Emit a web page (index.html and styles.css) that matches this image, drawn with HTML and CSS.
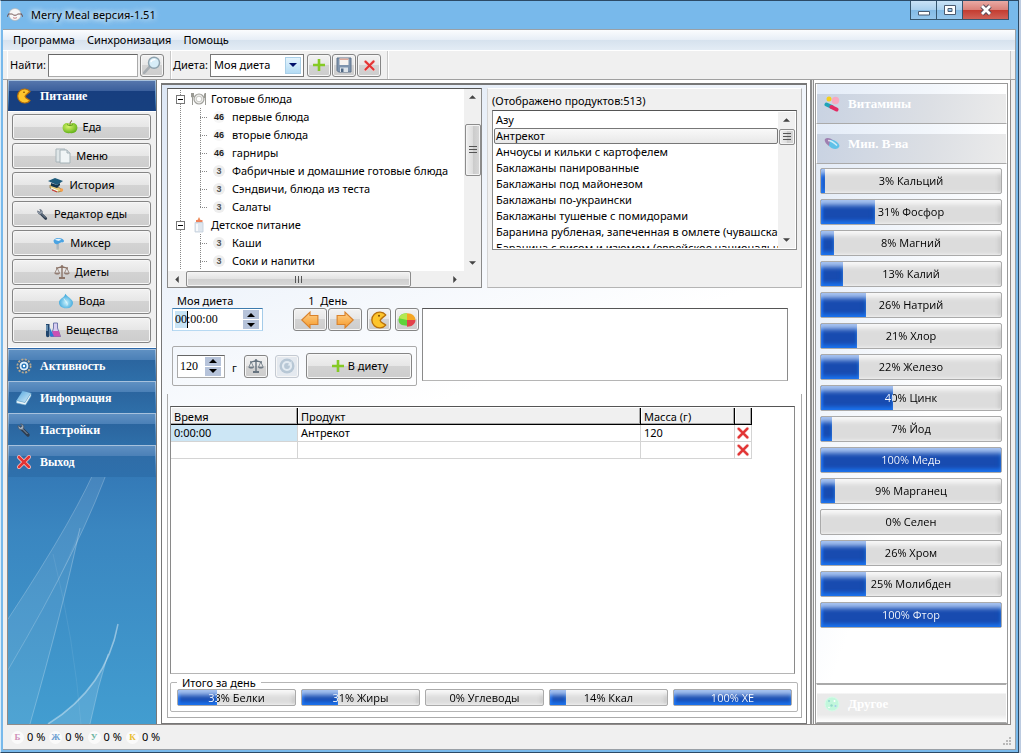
FILE: index.html
```html
<!DOCTYPE html>
<html lang="ru">
<head>
<meta charset="utf-8">
<title>Merry Meal версия-1.51</title>
<link rel="stylesheet" href="styles.css">
</head>
<body>
<svg class="defs" aria-hidden="true">
  <defs>
    <linearGradient id="gOrange" x1="0" y1="0" x2="0" y2="1"><stop offset="0" stop-color="#ffd089"/><stop offset="1" stop-color="#f59a2b"/></linearGradient>
    <linearGradient id="gBook" x1="0" y1="0" x2="1" y2="1"><stop offset="0" stop-color="#4fa3dc"/><stop offset="1" stop-color="#d9f0fb"/></linearGradient>
    <radialGradient id="gApple" cx=".4" cy=".35" r=".7"><stop offset="0" stop-color="#d9f56c"/><stop offset="1" stop-color="#5cae14"/></radialGradient>
    <radialGradient id="gDrop" cx=".5" cy=".6" r=".6"><stop offset="0" stop-color="#c4f0fc"/><stop offset="1" stop-color="#2f9fd8"/></radialGradient>
  </defs>
  <symbol id="pac" viewBox="0 0 16 16"><path d="M14 3.5A7 7 0 1 0 14 12.500C12 11 9.500 10.500 9 8.300C9.500 6.500 12 5.500 14 3.500Z" fill="#fdc52c" stroke="#b9700a" stroke-width="1.200" stroke-linejoin="round"/><circle cx="8" cy="4.200" r=".8" fill="#6d3d00"/></symbol>
  <symbol id="apple" viewBox="0 0 16 16"><path d="M8 5C5 3 .6 4.500 .6 8.500S4 15 8 14c4 1 7.400-1.500 7.400-5.500S11 3 8 5Z" fill="url(#gApple)"/><path d="M8 5.500C8 3.500 8.500 2.500 10 1.500" fill="none" stroke="#69551b" stroke-width="1"/><path d="M5 5.500c2 1.500 4 1.500 6 0" fill="none" stroke="#4a920f" stroke-width=".8"/></symbol>
  <symbol id="doc" viewBox="0 0 16 16"><path d="M1 1h9v13H1z" fill="#dfe6e8" stroke="#a9b5ba"/><path d="M5 2h7l3 3v10H5z" fill="#f0f5f6" stroke="#a6b3b8"/><path d="M12 2v3h3" fill="#d2dce0" stroke="#a6b3b8"/></symbol>
  <symbol id="grad" viewBox="0 0 16 16"><path d="M2 8l10 3 2 3-4 1-8-4z" fill="#e9cf7d" stroke="#8b6b2b" stroke-width=".7"/><path d="M3 11l7 3" stroke="#fff" stroke-width="1"/><path d="M0 4l7-3 8 3-6 4z" fill="#1f5c7c"/><path d="M3 6v3l6 2 3-3V6L9 8z" fill="#12364f"/><circle cx="13.500" cy="13" r="1.700" fill="#f5a04c"/><path d="M4 13l5 2" stroke="#c33" stroke-width="1"/></symbol>
  <symbol id="wrench" viewBox="0 0 16 16"><path d="M5 6l7 7" stroke="#2e3d4f" stroke-width="3.400" stroke-linecap="round"/><path d="M2 3.500C2 7 4 8.200 6.500 7.400L7.600 6C8.300 4 7 2 4.600 1.900L6.200 4 4.800 5.400Z" fill="#a8b3c0" stroke="#485566" stroke-width=".8"/><path d="M6.500 7l5 5" stroke="#8d9cac" stroke-width="1"/></symbol>
  <symbol id="mixer" viewBox="0 0 16 16"><path d="M5.500 8h3v7.500h-3z" fill="#aeb9c1"/><path d="M2 4C5 0 12 1 14.500 4c.8 2-.5 3-2.500 2.600C9 7 8 9.500 5.500 9 3 8.500 1.500 6 2 4Z" fill="#4aa3e2"/><path d="M3.500 3.500c3-2 6-1.500 8 0L8 5Z" fill="#e8f5fd"/></symbol>
  <symbol id="scales" viewBox="0 0 16 16"><path d="M8 1.500v12M2 4c3 0 4-1 6-1s3 1 6 1" fill="none" stroke="currentColor" stroke-width="1.400"/><path d="M3.200 4L.8 9.200h4.800zM12.800 4l-2.400 5.200h4.800z" fill="none" stroke="currentColor" stroke-width=".8"/><path d="M.5 9.200h5.400c-.4 1.800-5 1.800-5.400 0zM10.100 9.200h5.400c-.4 1.800-5 1.800-5.400 0zM5 13h6v2H5z" fill="currentColor"/><circle cx="8" cy="2.500" r="1.300" fill="currentColor"/></symbol>
  <symbol id="drop" viewBox="0 0 16 16"><path d="M7.500.8C9 4 15 6 15 10a6 5.500 0 0 1-6.500 5.300C4 15.500 1 13 1 9.500 1 6 6 5 7.500.8Z" fill="url(#gDrop)"/><path d="M6 5.500c1 3 4 3.500 3 7" fill="none" stroke="#fff" stroke-opacity=".7"/></symbol>
  <symbol id="flasks" viewBox="0 0 16 16"><path d="M1 2h3.500v11.500a1.700 1.700 0 0 1-3.500 0z" fill="#20456d"/><path d="M2 3v6" stroke="#a9d4ee" stroke-width="1"/><path d="M8.500 1h4v5l3 8.500h-9.500l2.500-8.500z" fill="#d7cdf0" stroke="#54609c" stroke-width=".8"/><path d="M7.800 9h6l1.700 5.500h-9z" fill="#c950b4"/><path d="M4.500 5L9 14.500H5z" fill="#2a7bd2"/></symbol>
  <symbol id="gear" viewBox="0 0 16 16"><circle cx="8" cy="8" r="6.500" fill="none" stroke="#b9a98e" stroke-width="2" stroke-dasharray="2 1.400"/><circle cx="8" cy="8" r="5" fill="#dceefb" stroke="#1f4f80" stroke-width="1"/><circle cx="8" cy="8" r="2.600" fill="#2173b8"/><circle cx="8" cy="8" r="1.200" fill="#fff"/></symbol>
  <symbol id="book" viewBox="0 0 16 16"><path d="M6.500 1l8.500 2-6 9.500-8.500-2z" fill="url(#gBook)"/><path d="M.5 10.500l8.500 2L15 3v3L9.500 15l-9-2z" fill="#eef6fa" stroke="#6aa9cf" stroke-width=".6"/></symbol>
  <symbol id="cross" viewBox="0 0 16 16"><path d="M3 3.200L13 13M13 3L3 13" stroke="#f3c4c4" stroke-width="4" stroke-linecap="round"/><path d="M3 3.200L13 13M13 3L3 13" stroke="#e23333" stroke-width="2.500" stroke-linecap="round"/></symbol>
  <symbol id="plus" viewBox="0 0 16 16"><path d="M8 2v12M2 8h12" stroke="#85ca25" stroke-width="2.600"/></symbol>
  <symbol id="disk" viewBox="0 0 16 16"><path d="M1 1h14v14H2.500L1 13.500z" fill="#7f94ad" stroke="#60748c"/><path d="M3.500 1.500h9V8h-9z" fill="#f7f3ef"/><path d="M3.500 1.500h9V3h-9z" fill="#dba89b"/><path d="M4 10.500h8V15H4z" fill="#dde4ea"/><path d="M5 11.500h2.500V15H5z" fill="#526a86"/></symbol>
  <symbol id="lens" viewBox="0 0 16 16"><path d="M1 15l5-5.500" stroke="#a7adb2" stroke-width="2.400" stroke-linecap="round"/><circle cx="9.800" cy="6" r="4.900" fill="#d7edf8" stroke="#8ea2ae" stroke-width="1.300"/><path d="M7 5.500c.5-2 2-2.500 4-2.300" fill="none" stroke="#fff" stroke-width="1.200"/></symbol>
  <symbol id="arrow" viewBox="0 0 16 16"><path d="M.7 8L8 1v3h7v8H8v3z" fill="url(#gOrange)" stroke="#d9822b" stroke-width="1"/></symbol>
  <symbol id="pie" viewBox="0 0 16 16"><path d="M8 8V2C3 2 .5 4.500 .5 8S3 13 8 13z" fill="#5fd33c"/><path d="M8 8h7.500c0-3-2.500-6-7.500-6z" fill="#f5a623"/><path d="M8 8h7.500c0 3.500-3 6-7.500 6z" fill="#e3424b"/><path d="M8 8V2C4 2 1.500 4 .8 6.500z" fill="#b5e850"/></symbol>
  <symbol id="redo" viewBox="0 0 16 16"><circle cx="8" cy="8" r="7.500" fill="#b7c7d5"/><circle cx="8" cy="8" r="4" fill="none" stroke="#e3ebf2" stroke-width="2.200"/><path d="M12.500 3v4.500H8.500z" fill="#e3ebf2"/></symbol>
  <symbol id="plate" viewBox="0 0 16 16"><circle cx="8" cy="8" r="5" fill="#ededeb" stroke="#a1a19c" stroke-width="1.200"/><circle cx="8" cy="8" r="2.800" fill="#fff" stroke="#c7c7c2"/><path d="M1.500 2v12M14.500 2v12M.5 2v4h2V2M13.500 7V3l1-1" fill="none" stroke="#9a9a94"/></symbol>
  <symbol id="bottle" viewBox="0 0 16 16"><path d="M8 0l1.500 3h-3z" fill="#ef8e5d"/><path d="M5 3h6.500v2.500H5z" fill="#f0825a"/><path d="M4 5.500h8V15H4z" fill="#dfe6ee" stroke="#c2cedb" stroke-width=".8"/><path d="M6 7v7" stroke="#fff" stroke-width="1.500"/></symbol>
  <symbol id="pills" viewBox="0 0 16 16"><circle cx="5" cy="3" r="2.500" fill="#f5cf1b"/><circle cx="11.500" cy="4.500" r="3.700" fill="#f7a9c0"/><path d="M2.500 8.500l5.500 2.500" stroke="#20a4b8" stroke-width="4" stroke-linecap="round"/><path d="M7.500 11l5 2.500" stroke="#e22a62" stroke-width="4" stroke-linecap="round"/></symbol>
  <symbol id="capsule" viewBox="0 0 16 16"><path d="M1 3c2-2 6-1 9 2l-5 5C2 8 0 5 1 3Z" fill="#9f7fb0"/><path d="M6 4c4-1 9 3 9.500 6-1 4-7 4-10.500 0z" fill="#5fc1e8"/><path d="M4 4.500c3 0 6 2 9 5" fill="none" stroke="#fff" stroke-opacity=".7" stroke-width="1.500"/></symbol>
  <symbol id="microbe" viewBox="0 0 16 16"><circle cx="8" cy="8" r="7" fill="#c2f7dc" stroke="#d8fbe9"/><circle cx="5" cy="5" r="1" fill="#8fd5cf"/><circle cx="10.500" cy="5" r="1" fill="#fff"/><circle cx="7.500" cy="9.500" r="1.200" fill="#92d9c8"/><circle cx="11.500" cy="10" r="1" fill="#a6c6ee"/><circle cx="5" cy="11.500" r=".8" fill="#fff"/></symbol>
  <symbol id="chef" viewBox="0 0 16 16"><ellipse cx="8" cy="7.500" rx="6" ry="6" fill="#f7f7f7" stroke="#b6b6b6" stroke-width=".7"/><path d="M1 7h4.500l1 1.200h3l1-1.200H15M0 10l1.500-3M16 10l-1.500-3" fill="none" stroke="#6b4c4c" stroke-width=".9"/><path d="M6 10.500c1 1 3 .8 4 0" fill="none" stroke="#c98082"/></symbol>
  <symbol id="up" viewBox="0 0 8 4"><path d="M0 4l4-4 4 4z" fill="currentColor"/></symbol>
  <symbol id="down" viewBox="0 0 8 4"><path d="M0 0l4 4 4-4z" fill="currentColor"/></symbol>
  <symbol id="left" viewBox="0 0 4 8"><path d="M4 0L0 4l4 4z" fill="currentColor"/></symbol>
  <symbol id="right" viewBox="0 0 4 8"><path d="M0 0l4 4-4 4z" fill="currentColor"/></symbol>
</svg>

<div class="window">
  <header class="titlebar">
    <svg class="icon"><use href="#chef"/></svg>
    <h1 class="caption">Merry Meal версия-1.51</h1>
    <div class="winbtns">
      <button class="winbtn" aria-label="Свернуть"><svg viewBox="0 0 14 14"><path d="M1.500 8.500h11v3.500h-11z" fill="#fff" stroke="#4b5b70"/></svg></button>
      <button class="winbtn" aria-label="Развернуть"><svg viewBox="0 0 14 14"><path d="M1.500 2.500h11v9h-11zM5 5.500h4v3H5z" fill="#fff" fill-rule="evenodd" stroke="#4b5b70"/></svg></button>
      <button class="winbtn close" aria-label="Закрыть"><svg viewBox="0 0 14 14"><path d="M3 3l8 8M11 3l-8 8" stroke="#5a4a58" stroke-width="4.800"/><path d="M3 3l8 8M11 3l-8 8" stroke="#fff" stroke-width="2.800"/></svg></button>
    </div>
  </header>

  <div class="client">
    <nav class="menu">
      <button>Программа</button><button>Синхронизация</button><button>Помощь</button>
    </nav>
    <div class="toolbar">
      <div class="tools">
        <label for="find">Найти:</label>
        <input id="find" class="find" type="text">
        <button class="btn tool" aria-label="Найти"><svg class="icon big"><use href="#lens"/></svg></button>
      </div>
      <div class="tools">
        <label for="diet">Диета:</label>
        <span class="combo"><select id="diet"><option>Моя диета</option></select><span class="combo-arrow"><svg><use href="#down"/></svg></span></span>
        <button class="btn tool" aria-label="Добавить"><svg class="icon"><use href="#plus"/></svg></button>
        <button class="btn tool" aria-label="Сохранить"><svg class="icon"><use href="#disk"/></svg></button>
        <button class="btn tool" aria-label="Удалить"><svg class="icon small"><use href="#cross"/></svg></button>
      </div>
      <div class="tools rest"></div>
    </div>

    <main class="body">
      <aside class="side">
        <svg class="swoosh" viewBox="0 0 148 376" preserveAspectRatio="none" aria-hidden="true">
          <path d="M92 110Q70 165 0 271V322Q75 195 104 110Z" fill="#fff" fill-opacity=".09"/>
          <path d="M92 110Q70 165 0 271M104 110Q75 195 0 322" fill="none" stroke="#fff" stroke-opacity=".22"/>
          <path d="M72 180Q55 260 22 376H0V322Q50 240 72 180Z" fill="#fff" fill-opacity=".07"/>
          <path d="M72 180Q55 260 22 376" fill="none" stroke="#fff" stroke-opacity=".25"/>
          <path d="M45 206Q66 290 73 376" fill="none" stroke="#fff" stroke-opacity=".08"/>
          <path d="M110 276Q98 340 40 376H82Q90 338 100 306Q108 296 110 276Z" fill="#fff" fill-opacity=".12"/>
          <path d="M110 276Q98 340 40 376" fill="none" stroke="#fff" stroke-opacity=".4" stroke-width="1.500"/>
          <path d="M100 306Q90 338 82 376" fill="none" stroke="#fff" stroke-opacity=".25"/>
        </svg>
        <button class="section active"><svg class="icon"><use href="#pac"/></svg>Питание</button>
        <div class="group">
          <button class="btn wide"><svg class="icon"><use href="#apple"/></svg>Еда</button>
          <button class="btn wide"><svg class="icon"><use href="#doc"/></svg>Меню</button>
          <button class="btn wide"><svg class="icon"><use href="#grad"/></svg>История</button>
          <button class="btn wide"><svg class="icon small"><use href="#wrench"/></svg>Редактор еды</button>
          <button class="btn wide"><svg class="icon small"><use href="#mixer"/></svg>Миксер</button>
          <button class="btn wide"><svg class="icon brown"><use href="#scales"/></svg>Диеты</button>
          <button class="btn wide"><svg class="icon"><use href="#drop"/></svg>Вода</button>
          <button class="btn wide"><svg class="icon"><use href="#flasks"/></svg>Вещества</button>
        </div>
        <button class="section"><svg class="icon"><use href="#gear"/></svg>Активность</button>
        <button class="section"><svg class="icon"><use href="#book"/></svg>Информация</button>
        <button class="section"><svg class="icon"><use href="#wrench"/></svg>Настройки</button>
        <button class="section"><svg class="icon"><use href="#cross"/></svg>Выход</button>
      </aside>

      <section class="work">
        <div class="pick">
          <div class="tree">
            <ul class="nodes">
              <li><span class="row root"><i class="box"></i><svg class="icon"><use href="#plate"/></svg>Готовые блюда</span>
                <ul>
                  <li class="row"><b class="badge n46">46</b>первые блюда</li>
                  <li class="row"><b class="badge n46">46</b>вторые блюда</li>
                  <li class="row"><b class="badge n46">46</b>гарниры</li>
                  <li class="row"><b class="badge">3</b>Фабричные и домашние готовые блюда</li>
                  <li class="row"><b class="badge">3</b>Сэндвичи, блюда из теста</li>
                  <li class="row"><b class="badge">3</b>Салаты</li>
                </ul>
              </li>
              <li><span class="row root"><i class="box"></i><svg class="icon"><use href="#bottle"/></svg>Детское питание</span>
                <ul class="more">
                  <li class="row"><b class="badge">3</b>Каши</li>
                  <li class="row"><b class="badge">3</b>Соки и напитки</li>
                </ul>
              </li>
            </ul>
            <div class="vbar"><svg class="v"><use href="#up"/></svg><i class="thumb"></i><svg class="v"><use href="#down"/></svg></div>
            <div class="hbar"><svg class="h"><use href="#left"/></svg><i class="thumb"></i><svg class="h"><use href="#right"/></svg></div>
          </div>
          <div class="products">
            <p class="count">(Отображено продуктов:513)</p>
            <div class="list">
              <ul role="listbox" aria-label="Продукты">
                <li role="option">Азу</li>
                <li role="option" aria-selected="true">Антрекот</li>
                <li role="option">Анчоусы и кильки с картофелем</li>
                <li role="option">Баклажаны панированные</li>
                <li role="option">Баклажаны под майонезом</li>
                <li role="option">Баклажаны по-украински</li>
                <li role="option">Баклажаны тушеные с помидорами</li>
                <li role="option">Баранина рубленая, запеченная в омлете (чувашская)</li>
                <li role="option">Баранина с рисом и изюмом (еврейское национальное)</li>
              </ul>
              <div class="vbar"><svg class="v"><use href="#up"/></svg><i class="thumb"></i><svg class="v"><use href="#down"/></svg></div>
            </div>
          </div>
        </div>

        <div class="diary">
          <div class="entry">
            <div class="controls">
              <div class="when">
                <div class="field">
                  <label for="time">Моя диета</label>
                  <span class="spin focus"><input id="time" type="text" value="00:00:00"><span class="arrows"><button aria-label="Больше"><svg><use href="#up"/></svg></button><button aria-label="Меньше"><svg><use href="#down"/></svg></button></span></span>
                </div>
                <div class="field days">
                  <span class="day">1&nbsp; День</span>
                  <div class="pair">
                    <button class="btn step" aria-label="Предыдущий день"><svg class="icon big"><use href="#arrow"/></svg></button>
                    <button class="btn step next" aria-label="Следующий день"><svg class="icon big"><use href="#arrow"/></svg></button>
                  </div>
                </div>
                <button class="btn tool" aria-label="Питание"><svg class="icon big"><use href="#pac"/></svg></button>
                <button class="btn tool" aria-label="Диаграмма"><svg class="icon big"><use href="#pie"/></svg></button>
              </div>
              <div class="amount">
                <span class="spin mass"><input id="mass" type="text" value="120"><span class="arrows"><button aria-label="Больше"><svg><use href="#up"/></svg></button><button aria-label="Меньше"><svg><use href="#down"/></svg></button></span></span>
                <label for="mass">г</label>
                <button class="btn tool slate" aria-label="Взвесить"><svg class="icon"><use href="#scales"/></svg></button>
                <button class="btn tool off" aria-label="Обновить"><svg class="icon"><use href="#redo"/></svg></button>
                <button class="btn add"><svg class="icon"><use href="#plus"/></svg>В диету</button>
              </div>
            </div>
            <textarea class="memo" aria-label="Описание"></textarea>
          </div>

          <div class="grid">
            <table>
              <colgroup><col class="c1"><col><col class="c3"><col class="c4"></colgroup>
              <thead><tr><th>Время</th><th>Продукт</th><th>Масса (г)</th><th></th></tr></thead>
              <tbody>
                <tr><td class="cur">0:00:00</td><td>Антрекот</td><td>120</td><td class="del"><button aria-label="Удалить строку"><svg class="icon"><use href="#cross"/></svg></button></td></tr>
                <tr><td></td><td></td><td></td><td class="del"><button aria-label="Удалить строку"><svg class="icon"><use href="#cross"/></svg></button></td></tr>
              </tbody>
            </table>
          </div>

          <fieldset class="totals">
            <legend>Итого за день</legend>
            <div class="meter" style="--v:33%"><span>33% Белки</span></div>
            <div class="meter" style="--v:31%"><span>31% Жиры</span></div>
            <div class="meter" style="--v:0%"><span>0% Углеводы</span></div>
            <div class="meter" style="--v:14%"><span>14% Ккал</span></div>
            <div class="meter" style="--v:100%"><span>100% ХЕ</span></div>
          </fieldset>
        </div>
      </section>

      <div class="split"></div>

      <aside class="nutrients">
        <button class="tab"><svg class="icon"><use href="#pills"/></svg>Витамины</button>
        <button class="tab open"><svg class="icon"><use href="#capsule"/></svg>Мин. В-ва</button>
        <div class="meters">
          <div class="meter" style="--v:2%"><span>3% Кальций</span></div>
          <div class="meter" style="--v:30%"><span>31% Фосфор</span></div>
          <div class="meter" style="--v:7%"><span>8% Магний</span></div>
          <div class="meter" style="--v:12%"><span>13% Калий</span></div>
          <div class="meter" style="--v:25%"><span>26% Натрий</span></div>
          <div class="meter" style="--v:20%"><span>21% Хлор</span></div>
          <div class="meter" style="--v:21%"><span>22% Железо</span></div>
          <div class="meter" style="--v:40%"><span>40% Цинк</span></div>
          <div class="meter" style="--v:6%"><span>7% Йод</span></div>
          <div class="meter" style="--v:100%"><span>100% Медь</span></div>
          <div class="meter" style="--v:8%"><span>9% Марганец</span></div>
          <div class="meter" style="--v:0%"><span>0% Селен</span></div>
          <div class="meter" style="--v:25%"><span>26% Хром</span></div>
          <div class="meter" style="--v:25%"><span>25% Молибден</span></div>
          <div class="meter" style="--v:100%"><span>100% Фтор</span></div>
        </div>
        <button class="tab faint"><svg class="icon"><use href="#microbe"/></svg>Другое</button>
      </aside>
    </main>

    <footer class="status">
      <span><b class="dot pink">Б</b>0 %</span>
      <span><b class="dot blue">Ж</b>0 %</span>
      <span><b class="dot green">У</b>0 %</span>
      <span><b class="dot yellow">К</b>0 %</span>
      <svg class="grip" viewBox="0 0 9 9" aria-hidden="true"><path d="M7 0h2v2H7zM4 3h2v2H4zM7 3h2v2H7zM1 6h2v2H1zM4 6h2v2H4zM7 6h2v2H7z" fill="#b9b9b9"/></svg>
    </footer>
  </div>
</div>
</body>
</html>
```
FILE: styles.css
```css
* { box-sizing: border-box; }
body {
  margin: 0;
  background: #bccbe0;
  font: 11px/16px "Noto Sans", "Open Sans", sans-serif;
  color: #000;
}
button, input, select, textarea { font: inherit; color: inherit; margin: 0; padding: 0; }
button { border: 0; background: none; }
ul, p, h1 { margin: 0; padding: 0; list-style: none; }
.defs { position: absolute; width: 0; height: 0; }
.icon { width: 16px; height: 16px; flex: none; display: block; }
.icon.small { width: 13px; height: 13px; }
.icon.big { width: 18px; height: 18px; }

/* Window frame */
.window {
  display: flex;
  flex-direction: column;
  height: 100vh;
  margin-right: 2px;
  padding: 0 2px 2px 2px;
  border: 1px solid #2c4a66;
  border-left-color: #d9ecf9;
  background: #78b9eb;
}
.titlebar { display: flex; align-items: center; flex: none; height: 28px; padding-left: 4px; gap: 8px; }
.caption { flex: 1; font-size: 11px; font-weight: 400; text-shadow: 0 0 6px #fff, 0 0 6px #fff; }
.winbtns { display: flex; align-self: flex-start; margin-right: 7px; border: 1px solid #35566f; border-top: 0; }
.winbtn { display: grid; place-items: center; width: 26px; height: 18px; border-right: 1px solid #35566f; background: linear-gradient(#c9e2f6, #a9d0ee 50%, #83bbe6 50%, #94c6ec); }
.winbtn svg { width: 14px; height: 14px; }
.winbtn.close { width: 45px; border-right: 0; background: linear-gradient(#e9aaa4, #da8078 50%, #c33b2f 50%, #cf6258); }
.client { flex: 1; min-height: 0; display: flex; flex-direction: column; background: #f0f0f0; border: 1px solid #9aa0a6; border-width: 1px 1px 1px 0; }

.menu { display: flex; gap: 12px; flex: none; height: 20px; padding-left: 10px; background: linear-gradient(#fbfcfe, #e6edf6 50%, #d6e2ee 50%, #e3ecf5); }
.toolbar { display: flex; flex: none; height: 30px; padding-left: 4px; border-bottom: 1px solid #a0a0a0; border-top: 1px solid #fff; }
.tools { display: flex; align-items: center; gap: 2px; height: 28px; padding: 0 6px 0 2px; border-left: 1px solid #fff; border-right: 1px solid #c8c8c8; }
.tools + .tools { padding-left: 1px; }
.tools .btn + .btn { margin-left: -1px; }
.tools .btn { position: relative; }
.rest { flex: 1; margin-right: 4px; }
.find { width: 90px; height: 23px; border: 1px solid #aaa; border-top-color: #666; border-left-color: #777; background: #fff; }
.combo { position: relative; display: flex; width: 94px; height: 23px; margin-right: 1px; }
.combo select { width: 100%; appearance: none; padding-left: 3px; border: 1px solid #777; border-radius: 0; background: #fff; }
.combo-arrow { position: absolute; right: 3px; top: 3px; width: 16px; height: 17px; display: grid; place-items: center; border: 1px solid #a9cfe8; background: linear-gradient(#e3f3fd, #b4dcf4); color: #00106a; pointer-events: none; }
.combo-arrow svg { width: 8px; height: 4px; }

.btn {
  display: flex;
  align-items: center;
  justify-content: center;
  gap: 5px;
  border: 1px solid #858585;
  border-radius: 3px;
  background: linear-gradient(#f2f2f2, #e6e6e6 50%, #d3d3d3 50%, #cdcdcd);
  box-shadow: inset 0 0 0 1px #f7f7f7;
}
.tool { width: 24px; height: 23px; flex: none; }
.off { border-color: #c4cad2; background: #e4e9ef; }
.slate { color: #66737f; }
.brown { color: #8c7468; }

.body { flex: 1; min-height: 0; display: grid; grid-template-columns: 149px minmax(0, 1fr) 4px 196px; margin: 0 4px; border: 1px solid #8f8b89; border-width: 0 1px 1px 1px; background: #fff; }

/* Left navigation */
.side { position: relative; display: flex; flex-direction: column; border-right: 1px solid #777; background: linear-gradient(#24599e, #2c69ab 50%, #3a86c0 70%, #429dd0); }
.swoosh { position: absolute; left: 0; bottom: 0; width: 100%; height: 376px; }
.section {
  position: relative;
  display: flex;
  align-items: center;
  gap: 8px;
  flex: none;
  height: 32px;
  padding-left: 7px;
  border: 1px solid #8fb2d4;
  border-bottom: 0;
  border-image: linear-gradient(#a9c3de, #4d86bb 60%, transparent) 1;
  background: linear-gradient(#5f90c2, #4b80b7 10px, #2b659f 10px, #2e6fa9);
  background-clip: padding-box;
  color: #fff;
  font: bold 12px/16px "Liberation Serif", serif;
}
.section:last-child { background: linear-gradient(#5f90c2, #4b80b7 10px, #2f6da8 10px, #2e70ac); }
.section.active { height: 31px; background: linear-gradient(#5576ac, #3a5f9c 10px, #173e7f 10px, #17407f); }
.group { position: relative; display: flex; flex-direction: column; gap: 3px; margin-bottom: 1px; padding: 2px 5px 4px 4px; background: #f0f0f0; border-top: 1px solid #fff; border-bottom: 1px solid #fff; }
.wide { height: 26px; }

/* Work area */
.work { display: flex; flex-direction: column; min-width: 0; margin: 3px 3px 0 4px; padding: 3px 4px 5px 5px; border: 1px solid #777; border-width: 2px 1px 1px 1px; background: linear-gradient(160deg, #dde7f5, #eff4fb 25%, #fff 48%); }
.pick { display: grid; grid-template-columns: minmax(0, 1fr) minmax(0, 1fr); gap: 5px; flex: none; height: 200px; }
.tree { display: grid; grid-template: minmax(0, 1fr) 16px / minmax(0, 1fr) 17px; overflow: hidden; border: 1px solid #8a8a8a; border-top-color: #555; background: #fff; }
.nodes { overflow: hidden; padding: 1px 0 0 7px; white-space: nowrap; position: relative; }
.row { display: flex; align-items: center; height: 18px; gap: 4px; position: relative; }
.nodes ul { margin: 0 0 0 25px; background: repeating-linear-gradient(#888 0 1px, transparent 1px 2px) 0 0 / 1px calc(100% - 9px) no-repeat; }
.nodes ul.more { background-size: 1px 100%; }
.nodes > li { background: repeating-linear-gradient(#888 0 1px, transparent 1px 2px) 5px 0 / 1px 100% no-repeat; }
.nodes li.row::before { content: ""; width: 8px; height: 1px; background: repeating-linear-gradient(90deg, #888 0 1px, transparent 1px 2px); }
.box { width: 9px; height: 9px; margin-left: 1px; border: 1px solid #777; background: linear-gradient(#000, #000) center / 5px 1px no-repeat #fff; }
.row.root .icon { margin-left: 2px; }
.badge { display: grid; place-items: center; flex: none; width: 12px; height: 12px; margin: 0 3px 0 1px; border-radius: 6px; background: #eee; font: bold 9px/12px "Liberation Sans", sans-serif; color: #555; }
.n46 { background: #f6f6f6; color: #222; }
.vbar { display: flex; flex-direction: column; align-items: center; padding: 6px 0; background: #f0f0f0; color: #444; }
.hbar { grid-column: 1; display: flex; align-items: center; padding: 0 7px; background: #f0f0f0; color: #444; }
.tree::after { content: ""; background: #f0f0f0; }
.v { width: 7px; height: 4px; flex: none; }
.h { width: 4px; height: 7px; flex: none; }
.thumb { display: block; border: 1px solid #8c8c8c; border-radius: 2px; box-shadow: inset 0 0 0 1px #f4f4f4; }
.vbar .thumb { width: 16px; height: 52px; background: repeating-linear-gradient(#555 0 1px, transparent 1px 3px) center / 8px 8px no-repeat, linear-gradient(90deg, #f0f0f0, #dcdcdc 50%, #cbcbcb 50%, #d8d8d8); margin: 25px 0 auto; }
.list .vbar .thumb { height: 16px; margin-top: 7px; }
.hbar .thumb { width: 225px; height: 16px; margin: 0 auto 0 7px; background: repeating-linear-gradient(90deg, #555 0 1px, transparent 1px 3px) center / 8px 7px no-repeat, linear-gradient(#f4f4f4, #e2e2e2 50%, #cfcfcf 50%, #d9d9d9); }

.products { padding: 4px 4px; border: 1px solid #b4b4b4; border-top-color: #fff; border-left-color: #d5d5d5; background: #f0f0f0; }
.count { height: 17px; }
.list { display: grid; grid-template-columns: minmax(0, 1fr) 17px; height: 140px; padding: 1px; overflow: hidden; border: 1px solid #8a8a8a; border-top-color: #555; background: #fff; }
.list ul { overflow: hidden; white-space: nowrap; }
.list li { height: 16px; padding-left: 2px; }
.list li[aria-selected] { padding-left: 1px; border: 1px solid #777; border-radius: 2px; line-height: 14px; background: linear-gradient(#f9f9f9, #e8e8e8); }

.diary { flex: 1; min-height: 0; display: flex; flex-direction: column; margin-top: 5px; padding: 0 6px 5px 2px; border: 1px solid #ababab; border-width: 0 1px 1px 1px; border-image: linear-gradient(transparent 24%, #ababab 24%) 1; }
.entry { display: flex; gap: 3px; padding: 0 7px 0 2px; height: 88px; margin-bottom: 25px; }
.controls { display: flex; flex-direction: column; justify-content: space-between; flex: none; width: 247px; height: 93px; }
.when { display: flex; align-items: flex-end; justify-content: space-between; }
.field { display: flex; flex-direction: column; }
.field label, .day { padding: 0 5px; line-height: 15px; }
.days { margin-left: 26px; }
.day { padding-left: 15px; }
.pair { display: flex; gap: 1px; }
.step { width: 34px; height: 23px; }
.next svg { transform: scaleX(-1); }
.spin { display: flex; align-items: center; width: 91px; height: 23px; padding: 1px 3px 1px 2px; border: 1px solid #aaa; border-top-color: #666; background: #fff; font-family: "Liberation Serif", serif; font-size: 12px; }
.spin.focus { border-color: #3d7bad #a4cbe9 #b7d9f2 #a4cbe9; }
.spin input { flex: 1; min-width: 0; height: 17px; border: 0; outline: 0; background: none; }
.spin.focus input { background: linear-gradient(#000, #000) 12px 0 / 1px 100% no-repeat, linear-gradient(#c8e4f6, #c8e4f6) 0 0 / 12px 100% no-repeat; }
.arrows { display: flex; flex-direction: column; gap: 1px; width: 16px; }
.arrows button { display: grid; place-items: center; height: 9px; background: #b6c3da; }
.arrows svg { width: 8px; height: 4px; }
.mass { width: 48px; }
.amount { display: flex; align-items: center; height: 40px; margin-right: 2px; padding: 0 4px; gap: 7px; border: 1px solid #aaa; border-radius: 2px; }
.amount label { padding-top: 4px; }
.add { flex: 1; height: 26px; gap: 2px; }
.memo { flex: 1; min-width: 0; height: 73px; margin-top: 15px; border: 1px solid #8a8a8a; border-top-color: #555; border-bottom-color: #b5b5b5; background: #fff; resize: none; }

.grid { flex: 1; min-height: 0; overflow: hidden; padding-top: 1px; border: 1px solid #8a8a8a; border-top-color: #555; border-bottom-color: #b5b5b5; background: #fff; }
table { width: calc(100% - 42px); table-layout: fixed; border-collapse: separate; border-spacing: 0; line-height: 14px; }
.c1 { width: 127px; }
.c3 { width: 94px; }
.c4 { width: 17px; }
th { height: 17px; padding: 2px 3px 0; text-align: left; font-weight: 400; background: #f0f0f0; border-right: 1px solid #000; border-bottom: 1px solid #000; box-shadow: inset -1px -1px #a8a8a8, inset 1px 0 #fff; }
td { height: 17px; padding: 0 3px; border-right: 1px solid #d4d4d4; border-bottom: 1px solid #d4d4d4; }
.cur { background: #cce6f5; }
td.del { padding: 0 1px; }
.del button, .del .icon { display: block; width: 14px; height: 14px; }

.totals { display: grid; grid-template-columns: repeat(5, 1fr); gap: 5px; height: 36px; margin: 2px -3px 0 0; padding: 0 5px 4px 6px; border: 1px solid #b5b5b5; border-radius: 2px; min-width: 0; }
.totals legend { padding: 0 5px; height: 13px; line-height: 13px; }

/* Percentage bars */
.meter { position: relative; height: 26px; border: 1px solid #aaa; border-radius: 2px; background: #dcdcdc; box-shadow: inset 0 7px 5px -3px #fafafa, inset 0 -3px 3px -2px #f2f2f2, inset -4px 0 4px -2px #c4c4c4; overflow: hidden; font: 11px/24px "Open Sans", "Noto Sans", sans-serif; text-align: center; }
.meter::before { content: ""; position: absolute; inset: 0 auto 0 0; width: var(--v); background: #184bb0; box-shadow: inset 0 8px 5px -3px #a9c4f0, inset 0 -4px 4px -1px #1c74f0, inset 3px 0 3px -1px #1c6ae8, inset -3px 0 4px -1px #1352b8; }
.meter span { position: relative; display: block; color: transparent; background: linear-gradient(90deg, #fff var(--v), #000 var(--v)); background-clip: text; -webkit-background-clip: text; }
.totals .meter { height: 17px; line-height: 15px; }

/* Right column */
.split { border: 1px solid #8e8e8e; border-width: 0 1px 0 2px; background: #e7e7e7; }
.nutrients { display: flex; flex-direction: column; margin: 3px 2px 0 1px; border: 1px solid #999; background: linear-gradient(110deg, #dfe8f5, #eef3fa 25%, #fff 55%); }
.tab { display: flex; align-items: center; gap: 8px; flex: none; height: 40px; padding: 0 7px; border: 1px solid #fff; border-top: 0; border-bottom: 1px solid #aaa; background: linear-gradient(100deg, #e4ecf8, #f2f6fb 60%, #fff) 0 0 / 100% 10px no-repeat, linear-gradient(100deg, #c8d2e2, #dcdfe4 60%, #ebebeb); color: #fff; font: bold 13px/16px "Liberation Serif", serif; }
.tab.faint { margin-top: auto; border-top: 2px solid #aaa; background: linear-gradient(#fff 8px, #eaeaea 9px, #eaeaea 80%, #fff); }
.meters { display: flex; flex-direction: column; gap: 5px; padding: 4px 5px 4px 4px; }

/* Status bar */
.status { display: flex; align-items: center; flex: none; gap: 4px; height: 24px; padding: 0 8px; }
.status span { display: flex; align-items: center; gap: 3px; }
.dot { display: grid; place-items: center; width: 13px; height: 13px; border-radius: 7px; background: #fafafa; font: bold 9px/13px "Liberation Serif", serif; }
.pink { color: #cf8fb8; }
.blue { color: #6d9fd2; }
.green { color: #6fb5a2; }
.yellow { color: #e9bd2d; }
.grip { width: 9px; height: 9px; margin: 8px -4px 0 auto; }
```
